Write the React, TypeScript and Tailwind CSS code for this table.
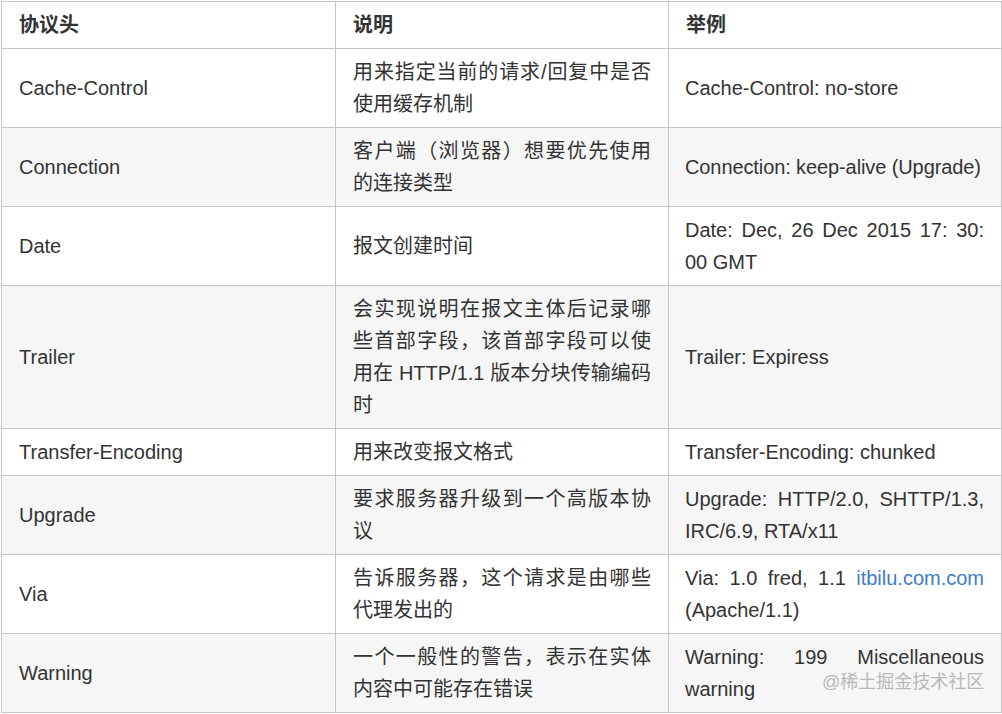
import React from "react";

type Row = { k: string; d: React.ReactNode; e: React.ReactNode };

const rows: Row[] = [
  { k: "Cache-Control", d: "用来指定当前的请求/回复中是否使用缓存机制", e: "Cache-Control: no-store" },
  {
    k: "Connection",
    d: "客户端（浏览器）想要优先使用的连接类型",
    e: <span className="whitespace-nowrap tracking-[-0.1px]">Connection: keep-alive (Upgrade)</span>,
  },
  { k: "Date", d: "报文创建时间", e: "Date: Dec, 26 Dec 2015 17: 30: 00 GMT" },
  {
    k: "Trailer",
    d: "会实现说明在报文主体后记录哪些首部字段，该首部字段可以使用在 HTTP/1.1 版本分块传输编码时",
    e: "Trailer: Expiress",
  },
  { k: "Transfer-Encoding", d: "用来改变报文格式", e: "Transfer-Encoding: chunked" },
  { k: "Upgrade", d: "要求服务器升级到一个高版本协议", e: "Upgrade: HTTP/2.0, SHTTP/1.3, IRC/6.9, RTA/x11" },
  {
    k: "Via",
    d: "告诉服务器，这个请求是由哪些代理发出的",
    e: (
      <>
        Via: 1.0 fred, 1.1 <span className="text-[#3d7cc9]">itbilu.com.com</span> (Apache/1.1)
      </>
    ),
  },
  { k: "Warning", d: "一个一般性的警告，表示在实体内容中可能存在错误", e: "Warning: 199 Miscellaneous warning" },
];

const cell = "border border-[#c6c6c6] px-[17px] py-[7px] align-middle text-justify";

export default function App() {
  return (
    <div
      className="relative w-[1002px] h-[714px] bg-white overflow-hidden text-[#333333] text-[20px] leading-[32px]"
      style={{ fontFamily: '"Liberation Sans", Arial, "Noto Sans CJK SC", sans-serif' }}
    >
      <table className="ml-[1px] mt-[1px] w-[1000px] table-fixed border-collapse" lang="zh-CN">
        <colgroup>
          <col className="w-[334px]" />
          <col className="w-[333px]" />
          <col className="w-[333px]" />
        </colgroup>
        <thead>
          <tr className="bg-white">
            <th className={cell + " text-left font-bold"}>协议头</th>
            <th className={cell + " text-left font-bold"}>说明</th>
            <th className={cell + " text-left font-bold"}>举例</th>
          </tr>
        </thead>
        <tbody>
          {rows.map((r, i) => (
            <tr key={r.k} className={i % 2 === 1 ? "bg-[#f6f6f6]" : "bg-white"}>
              <td className={cell}>{r.k}</td>
              <td className={cell}>{r.d}</td>
              <td className={cell + " pl-[16px]"}>{r.e}</td>
            </tr>
          ))}
        </tbody>
      </table>
      <div className="absolute left-[822px] top-[668px] text-[18px] leading-[28px] text-[#b9b9b9] whitespace-nowrap">
        @稀土掘金技术社区
      </div>
    </div>
  );
}
